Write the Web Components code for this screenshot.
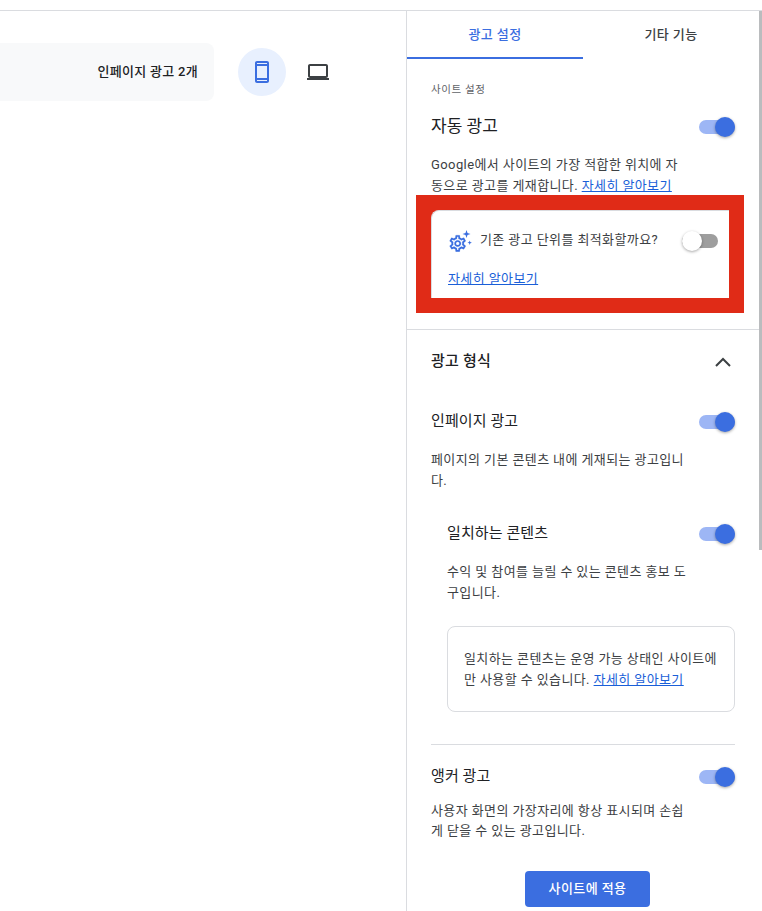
<!DOCTYPE html>
<html lang="ko"><head><meta charset="utf-8"><title>광고 설정</title>
<style>
html,body{margin:0;padding:0;background:#fff;height:911px;overflow:hidden}
body{font-family:Roboto,"Noto Sans CJK KR",sans-serif;color:#3c4043}
</style></head><body>
<ad-page></ad-page>
<template id="t-page"><style>
:host{display:flex;flex-direction:column;width:762px;height:911px;overflow:hidden;position:relative}
.top{height:10px;border-bottom:1px solid #dadce0;flex:none}
.body{flex:1;display:flex;min-height:0}
</style><div class="top"></div><div class="body"><ad-preview></ad-preview><ad-panel></ad-panel></div></template>

<template id="t-preview"><style>
:host{display:flex;align-items:flex-start;width:406px;flex:none;padding-top:32px;box-sizing:border-box}
.chip{width:214px;height:58px;background:#f8f9fa;border-radius:0 8px 8px 0;display:flex;align-items:center;justify-content:flex-end;padding-right:16px;box-sizing:border-box;font:500 13px/20px Roboto,"Noto Sans CJK KR",sans-serif;letter-spacing:.3px;color:#202124;flex:none}
.btns{display:flex;gap:8px;margin:5px 0 0 24px}
.b{width:48px;height:48px;border-radius:50%;display:flex;align-items:center;justify-content:center}
.b.on{background:#e8f0fe;color:#3b6ee0}
.b{color:#3c4043}
svg{display:block;fill:currentColor}
</style><div class="chip">인페이지 광고 2개</div>
<div class="btns">
<div class="b on"><svg width="24" height="24" viewBox="0 0 24 24"><path d="M17 1H7c-1.1 0-2 .9-2 2v18c0 1.1.9 2 2 2h10c1.1 0 2-.9 2-2V3c0-1.1-.9-2-2-2zm0 2v1H7V3h10zm0 3v12H7V6h10zM7 21v-1h10v1H7z"/></svg></div>
<div class="b"><svg width="24" height="24" viewBox="0 0 24 24"><path d="M20 18c1.100 0 2-.9 2-2V6c0-1.100-.9-2-2-2H4c-1.100 0-2 .9-2 2v10c0 1.100.9 2 2 2H1v2h22v-2h-3zM4 6h16v10H4V6z"/></svg></div>
</div></template>

<template id="t-panel"><style>
:host{display:block;position:relative;width:356px;flex:none;box-sizing:border-box;border-left:1px solid #dadce0;font:400 13px/21px Roboto,"Noto Sans CJK KR",sans-serif;letter-spacing:.4px;color:#3c4043}
.tabs{display:flex;width:352px;height:48px}
.tab{width:176px;box-sizing:border-box;height:48px;display:flex;align-items:center;justify-content:center;font-size:13px;font-weight:500;color:#3c4043;padding-bottom:1px}
.tab.on{color:#3b6ee0;border-bottom:2px solid #3b6ee0;padding-bottom:0}
.sec{width:352px;padding:0 24px;box-sizing:border-box}
.over{font-size:10.5px;line-height:14px;padding-top:24px;color:#5f6368;letter-spacing:.6px}
.a{color:#1a5fd8;text-decoration:underline}
.d{width:256px;margin:0}
.red{box-sizing:border-box;width:328px;height:118px;margin:-1px 0 0 9px;padding:15px;background:#e02b17}
.card{height:88px;box-sizing:border-box;background:#fff;border-top:1px solid #dadce0;border-left:1px solid #dadce0;border-top-left-radius:8px;padding:0 11px 0 16px}
.cr{display:flex;align-items:center;height:56px;font-size:13px;color:#3c4043;padding-top:1px;box-sizing:border-box}
.cr svg{flex:none;margin:0 8px 0 0;display:block}
.cr span{flex:1}
.hr{height:1px;background:#dadce0}
.fmt{display:flex;align-items:center;justify-content:space-between;height:62px;font-size:15px;font-weight:500;letter-spacing:.2px;color:#202124}
.fmt svg{display:block}
.box{box-sizing:border-box;width:288px;height:86px;margin:23px 0 32px 16px;border:1px solid #dadce0;border-radius:8px;padding:21px 16px 0 16px}
.in{margin-left:16px}
.apply{display:block;width:125px;height:36px;margin:30px 0 0 94px;border-radius:4px;background:#3b6ee0;color:#fff;text-align:center;font:500 13px/36px Roboto,"Noto Sans CJK KR",sans-serif;letter-spacing:.4px}
.thumb{position:absolute;right:0;top:0;width:3px;height:539px;background:#babcbe}
</style>
<div class="tabs"><div class="tab on">광고 설정</div><div class="tab">기타 기능</div></div>
<div class="sec">
<div class="over">사이트 설정</div>
<ad-row big style="margin-top:18px">자동 광고</ad-row>
<p class="d" style="margin-top:15px">Google에서 사이트의 가장 적합한 위치에 자<br>동으로 광고를 게재합니다. <span class="a">자세히 알아보기</span></p>
</div>
<div class="red"><div class="card">
<div class="cr"><svg width="24" height="24" viewBox="0 0 24 24" fill="#3b6ee0"><g transform="translate(-.26 5.5) scale(.83)" stroke="#3b6ee0" stroke-width=".2"><path d="M19.43 12.98c.04-.32.07-.64.07-.98 0-.34-.03-.66-.07-.98l2.11-1.65c.19-.15.24-.42.12-.64l-2-3.46c-.09-.16-.26-.25-.44-.25-.06 0-.12.01-.17.03l-2.49 1c-.52-.4-1.08-.73-1.69-.98l-.38-2.65C14.46 2.18 14.25 2 14 2h-4c-.25 0-.46.18-.49.42l-.38 2.65c-.61.25-1.17.59-1.69.98l-2.49-1c-.06-.02-.12-.03-.18-.03-.17 0-.34.09-.43.25l-2 3.46c-.13.22-.07.49.12.64l2.11 1.65c-.04.32-.07.65-.07.98 0 .33.03.66.07.98l-2.11 1.65c-.19.15-.24.42-.12.64l2 3.46c.09.16.26.25.44.25.06 0 .12-.01.17-.03l2.49-1c.52.4 1.08.73 1.69.98l.38 2.65c.03.24.24.42.49.42h4c.25 0 .46-.18.49-.42l.38-2.65c.61-.25 1.17-.59 1.69-.98l2.49 1c.06.02.12.03.18.03.17 0 .34-.09.43-.25l2-3.46c.12-.22.07-.49-.12-.64l-2.11-1.65zm-1.98-1.71c.04.31.05.52.05.73 0 .21-.02.43-.05.73l-.14 1.13.89.7 1.08.84-.7 1.21-1.27-.51-1.04-.42-.9.68c-.43.32-.84.56-1.25.73l-1.06.43-.16 1.13-.2 1.35h-1.4l-.19-1.35-.16-1.13-1.06-.43c-.43-.18-.83-.41-1.23-.71l-.91-.7-1.06.43-1.27.51-.7-1.21 1.08-.84.89-.7-.14-1.13c-.03-.31-.05-.54-.05-.74s.02-.43.05-.73l.14-1.13-.89-.7-1.08-.84.7-1.21 1.27.51 1.04.42.9-.68c.43-.32.84-.56 1.25-.73l1.06-.43.16-1.13.2-1.35h1.39l.19 1.35.16 1.13 1.06.43c.43.18.83.41 1.23.71l.91.7 1.06-.43 1.27-.51.7 1.21-1.07.85-.89.7.14 1.13zM12 8c-2.21 0-4 1.79-4 4s1.79 4 4 4 4-1.79 4-4-1.79-4-4-4zm0 6c-1.1 0-2-.9-2-2s.9-2 2-2 2 .9 2 2-.9 2-2 2z"/></g><path d="M18.500 2l1 3 3 1-3 1-1 3-1-3-3-1 3-1zM21.700 12.500l.6 1.600 1.600.6-1.600.6-.6 1.600-.6-1.600-1.600-.6 1.600-.6z"/></svg><span>기존 광고 단위를 최적화할까요?</span><ad-toggle off style="margin-top:2px"></ad-toggle></div>
<div class="a" style="line-height:20px;padding-top:2px">자세히 알아보기</div>
</div></div>
<div style="height:16px"></div>
<div class="hr"></div>
<div class="sec">
<div class="fmt"><span>광고 형식</span><svg width="24" height="24" viewBox="0 0 24 24" fill="none" stroke="#3c4043" stroke-width="2"><path d="M5 17l7-7 7 7"/></svg></div>
<ad-row style="margin-top:18px">인페이지 광고</ad-row>
<p class="d" style="margin-top:15px">페이지의 기본 콘텐츠 내에 게재되는 광고입니다.</p>
<div class="in" style="margin-top:31px"><ad-row>일치하는 콘텐츠</ad-row>
<p class="d" style="width:244px;margin-top:15px">수익 및 참여를 늘릴 수 있는 콘텐츠 홍보 도구입니다.</p></div>
<div class="box">일치하는 콘텐츠는 운영 가능 상태인 사이트에<br>만 사용할 수 있습니다. <span class="a">자세히 알아보기</span></div>
<div class="hr"></div>
<ad-row style="margin-top:20px">앵커 광고</ad-row>
<p class="d" style="margin-top:12px;line-height:20px">사용자 화면의 가장자리에 항상 표시되며 손쉽게 닫을 수 있는 광고입니다.</p>
<div class="apply">사이트에 적용</div>
</div>
<div class="thumb"></div></template>

<template id="t-row"><style>
:host{display:flex;align-items:center;justify-content:space-between;height:24px;font-size:15px;line-height:22px;font-weight:400;letter-spacing:.1px;color:#202124}
:host([big]){font-size:17px;letter-spacing:0}
span{position:relative;top:-1px}
</style><span><slot></slot></span><ad-toggle></ad-toggle></template>

<template id="t-toggle"><style>
:host{display:block;position:relative;width:36px;height:20px;flex:none}
.t{position:absolute;left:0;right:0;top:3px;height:14px;border-radius:7px;background:#9db6f5}
.k{position:absolute;right:0;top:0;width:20px;height:20px;border-radius:50%;background:#3b6ee0;box-shadow:0 1px 3px rgba(0,0,0,.35)}
:host([off]) .t{background:#9e9e9e}
:host([off]) .k{right:auto;left:0;background:#fff}
</style><div class="t"></div><div class="k"></div></template>

<script>
for (const [tag,id] of [['ad-page','t-page'],['ad-preview','t-preview'],['ad-panel','t-panel'],['ad-row','t-row'],['ad-toggle','t-toggle']]) {
  customElements.define(tag, class extends HTMLElement {
    constructor(){super();this.attachShadow({mode:'open'}).appendChild(document.getElementById(id).content.cloneNode(true));}
  });
}
</script>
</body></html>
